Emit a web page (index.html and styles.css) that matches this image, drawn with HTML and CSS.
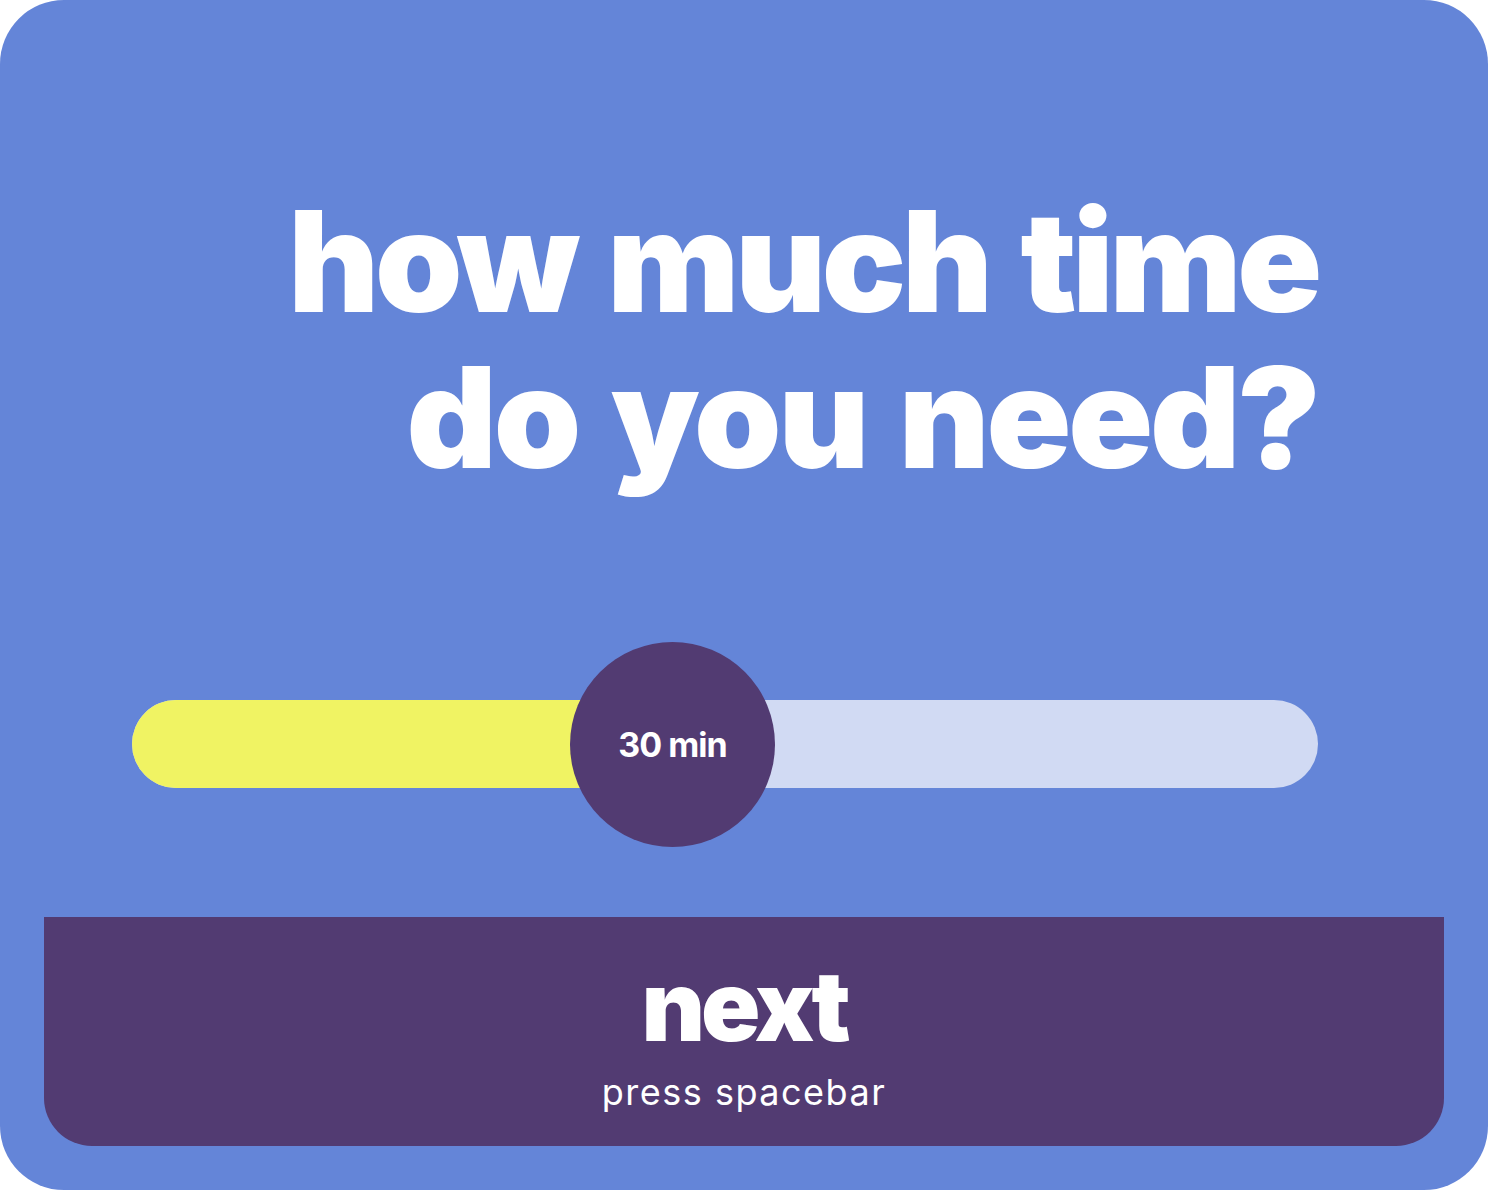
FILE: index.html
```html
<!DOCTYPE html>
<html>
<head>
<meta charset="utf-8">
<link rel="stylesheet" href="styles.css">
</head>
<body>
<div class="card">
  <h1 class="title">how much time<br>do you need?</h1>
  <div class="slider">
    <div class="track">
      <div class="fill"></div>
    </div>
    <div class="knob">30 min</div>
  </div>
  <div class="next">
    <div class="next-label">next</div>
    <div class="next-hint">press spacebar</div>
  </div>
</div>
</body>
</html>
```

FILE: styles.css
```css
html, body {
  margin: 0;
  padding: 0;
  background: #ffffff;
}
.card {
  width: 1488px;
  height: 1190px;
  box-sizing: border-box;
  background: #6485d8;
  border-radius: 64px;
  display: flex;
  flex-direction: column;
  overflow: hidden;
}
.title {
  margin: 183px 170px 0 0;
  text-align: right;
  font-family: Inter, "Noto Sans", sans-serif;
  font-weight: 900;
  font-size: 140px;
  line-height: 156px;
  letter-spacing: -3.2px;
  word-spacing: 8px;
  color: #ffffff;
}
.title::first-line {
  letter-spacing: -4.2px;
}
.slider {
  position: relative;
  margin: 205px 170px 0 132px;
  height: 88px;
}
.track {
  height: 88px;
  border-radius: 44px;
  background: #d1daf3;
  overflow: hidden;
}
.fill {
  width: 540px;
  height: 100%;
  background: #f0f363;
}
.knob {
  position: absolute;
  left: 438px;
  top: -58px;
  width: 205px;
  height: 205px;
  border-radius: 50%;
  background: #523b72;
  color: #ffffff;
  display: flex;
  align-items: center;
  justify-content: center;
  font-family: Inter, "Noto Sans", sans-serif;
  font-weight: 700;
  font-size: 34px;
  letter-spacing: -1px;
}
.next {
  margin: auto 44px 44px 44px;
  height: 229px;
  background: #523b72;
  border-radius: 0 0 48px 48px;
  display: flex;
  flex-direction: column;
  align-items: center;
  color: #ffffff;
}
.next-label {
  margin-top: 34px;
  font-family: Inter, "Noto Sans", sans-serif;
  font-weight: 900;
  font-size: 98px;
  line-height: 110px;
  letter-spacing: -4px;
}
.next-hint {
  margin-top: 10px;
  font-family: Inter, "Noto Sans", sans-serif;
  font-weight: 400;
  font-size: 36px;
  line-height: 42px;
  letter-spacing: 1.5px;
}
```
